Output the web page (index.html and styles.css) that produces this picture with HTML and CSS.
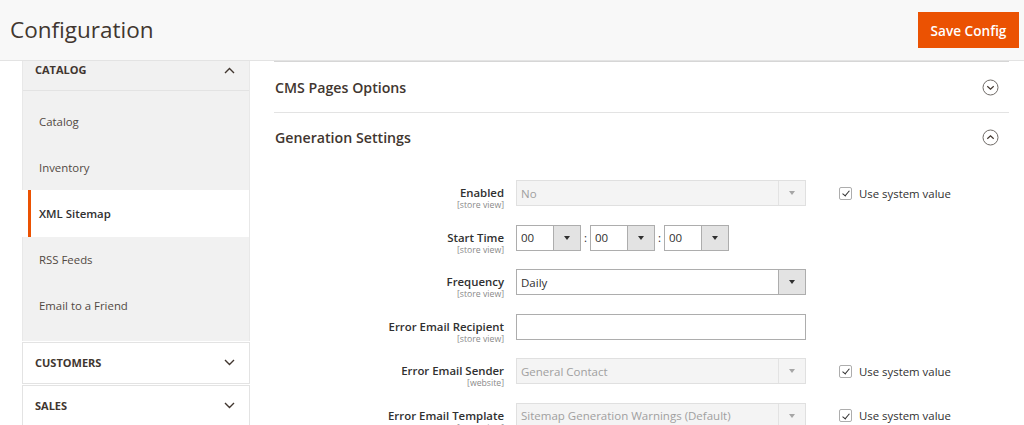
FILE: index.html
```html
<!DOCTYPE html>
<html lang="en">
<head>
<meta charset="utf-8">
<title>Configuration</title>
<link rel="stylesheet" href="styles.css">
</head>
<body>
<header class="page-header">
  <h1 class="page-title">Configuration</h1>
  <button class="btn-primary" type="button">Save Config</button>
</header>
<div class="page-body">
  <nav class="sidebar">
    <div class="nav-group open">
      <div class="nav-title">
        <span>CATALOG</span>
        <svg class="chev" width="11" height="7" viewBox="0 0 11 7"><path d="M1 6 L5.5 1.5 L10 6" fill="none" stroke="#41362f" stroke-width="1.4"/></svg>
      </div>
      <ul class="nav-items">
        <li class="nav-item"><span>Catalog</span></li>
        <li class="nav-item"><span>Inventory</span></li>
        <li class="nav-item active"><span>XML Sitemap</span></li>
        <li class="nav-item"><span>RSS Feeds</span></li>
        <li class="nav-item"><span>Email to a Friend</span></li>
      </ul>
    </div>
    <div class="nav-group">
      <div class="nav-title">
        <span>CUSTOMERS</span>
        <svg class="chev" width="11" height="7" viewBox="0 0 11 7"><path d="M1 1 L5.5 5.5 L10 1" fill="none" stroke="#41362f" stroke-width="1.4"/></svg>
      </div>
    </div>
    <div class="nav-group">
      <div class="nav-title">
        <span>SALES</span>
        <svg class="chev" width="11" height="7" viewBox="0 0 11 7"><path d="M1 1 L5.5 5.5 L10 1" fill="none" stroke="#41362f" stroke-width="1.4"/></svg>
      </div>
    </div>
  </nav>
  <main class="main">
    <section class="section">
      <div class="section-head">
        <h2>CMS Pages Options</h2>
        <svg class="circle-ico" width="17" height="17" viewBox="0 0 17 17"><circle cx="8.5" cy="8.5" r="7.5" fill="none" stroke="#6f6a66" stroke-width="1"/><path d="M5.3 7.2 L8.5 10.2 L11.7 7.2" fill="none" stroke="#41362f" stroke-width="1.2"/></svg>
      </div>
    </section>
    <section class="section open">
      <div class="section-head">
        <h2>Generation Settings</h2>
        <svg class="circle-ico" width="17" height="17" viewBox="0 0 17 17"><circle cx="8.5" cy="8.5" r="7.5" fill="none" stroke="#6f6a66" stroke-width="1"/><path d="M5.3 9.8 L8.5 6.8 L11.7 9.8" fill="none" stroke="#41362f" stroke-width="1.2"/></svg>
      </div>
      <div class="form">
        <div class="label"><span class="lbl">Enabled</span><span class="scope">[store view]</span></div>
        <div class="field">
          <div class="select disabled wide"><span class="val">No</span><span class="arrow"></span></div>
        </div>
        <label class="sys"><span class="cb"></span>Use system value</label>

        <div class="label"><span class="lbl">Start Time</span><span class="scope">[store view]</span></div>
        <div class="field time">
          <div class="select small"><span class="val">00</span><span class="arrow"></span></div>
          <span class="colon">:</span>
          <div class="select small"><span class="val">00</span><span class="arrow"></span></div>
          <span class="colon">:</span>
          <div class="select small"><span class="val">00</span><span class="arrow"></span></div>
        </div>
        <div></div>

        <div class="label"><span class="lbl">Frequency</span><span class="scope">[store view]</span></div>
        <div class="field">
          <div class="select wide"><span class="val">Daily</span><span class="arrow"></span></div>
        </div>
        <div></div>

        <div class="label"><span class="lbl">Error Email Recipient</span><span class="scope">[store view]</span></div>
        <div class="field">
          <div class="input"></div>
        </div>
        <div></div>

        <div class="label"><span class="lbl">Error Email Sender</span><span class="scope">[website]</span></div>
        <div class="field">
          <div class="select disabled wide"><span class="val">General Contact</span><span class="arrow"></span></div>
        </div>
        <label class="sys"><span class="cb"></span>Use system value</label>

        <div class="label"><span class="lbl">Error Email Template</span><span class="scope">[store view]</span></div>
        <div class="field">
          <div class="select disabled wide"><span class="val">Sitemap Generation Warnings (Default)</span><span class="arrow"></span></div>
        </div>
        <label class="sys"><span class="cb"></span>Use system value</label>
      </div>
    </section>
  </main>
</div>
</body>
</html>
```
FILE: styles.css
```css
* { box-sizing: border-box; }
html, body { margin: 0; padding: 0; }
body {
  font-family: "Open Sans", "Noto Sans", sans-serif;
  color: #303030;
  background: #fff;
  width: 1024px;
  height: 425px;
  overflow: hidden;
}
.page-header {
  height: 61px;
  background: #f8f8f8;
  border-bottom: 1px solid #e3e3e3;
  display: flex;
  align-items: flex-start;
  justify-content: space-between;
  padding: 0 5px 0 10px;
}
.page-title {
  margin: 13px 0 0;
  font-size: 22.5px;
  font-weight: 400;
  line-height: 34px;
  color: #41362f;
}
.btn-primary {
  margin-top: 12px;
  width: 101px;
  height: 36px;
  background: #eb5202;
  border: 1px solid #eb5202;
  color: #fff;
  font-family: inherit;
  font-size: 13.6px;
  font-weight: 600;
  padding: 0;
}
.page-body {
  display: flex;
  align-items: flex-start;
}
.sidebar {
  width: 228px;
  margin-left: 22px;
  flex: none;
}
.nav-group {
  border: 1px solid #e3e3e3;
  background: #fff;
  margin-top: 1px;
}
.nav-group.open {
  background: #f1f1f1;
  border-color: #e8e8e8;
  border-top: none;
  border-bottom: none;
  margin-top: 0;
}
.nav-title {
  display: flex;
  align-items: center;
  justify-content: space-between;
  height: 40px;
  padding: 0 14px 0 12px;
  font-size: 11px;
  font-weight: 700;
  color: #41362f;
}
.open .nav-title {
  height: 30px;
  align-items: flex-start;
  padding-top: 1px;
  border-bottom: 1px solid #e3e3e3;
}
.open .nav-title .chev { margin-top: 5px; }
.nav-items {
  list-style: none;
  margin: 0;
  padding: 7px 0 12px;
}
.nav-item {
  height: 46.2px;
  padding-left: 5px;
  font-size: 11.4px;
  color: #514943;
}
.nav-item span {
  display: flex;
  align-items: center;
  height: 100%;
  border-left: 3px solid transparent;
  padding-left: 8px;
}
.nav-item.active {
  background: #fff;
  margin-left: -1px;
  padding-left: 6px;
  color: #303030;
  font-weight: 600;
}
.nav-item.active span { border-left-color: #eb5202; }
.main {
  margin-left: 24px;
  width: 735px;
  border-top: 1px solid #d6d6d6;
}
.section { border-bottom: 1px solid #e3e3e3; }
.section.open { border-bottom: none; }
.section-head {
  display: flex;
  align-items: center;
  justify-content: space-between;
  height: 50px;
  padding: 0 10px 0 1px;
}
.section.open .section-head { padding-bottom: 2px; }
.section-head h2 {
  margin: 0;
  font-size: 14.2px;
  font-weight: 600;
  color: #41362f;
}
.form {
  display: grid;
  grid-template-columns: 230px 290px auto;
  grid-auto-rows: 26px;
  column-gap: 12px;
  row-gap: 18.6px;
  padding-top: 17px;
  align-items: start;
}
.label {
  display: flex;
  flex-direction: column;
  align-items: flex-end;
  padding-top: 5px;
  height: 26px;
}
.lbl {
  font-size: 11.4px;
  font-weight: 600;
  line-height: 15px;
  color: #303030;
  white-space: nowrap;
}
.scope {
  font-size: 8.7px;
  line-height: 11px;
  color: #8a8a8a;
  white-space: nowrap;
}
.field { height: 26px; display: flex; align-items: center; }
.select {
  display: flex;
  height: 26px;
  border: 1px solid #adadad;
  background: #fff;
  font-size: 11.5px;
  color: #303030;
}
.select.wide { width: 290px; }
.select .val {
  flex: 1;
  display: flex;
  align-items: center;
  padding-left: 4px;
  white-space: nowrap;
  overflow: hidden;
}
.select .arrow {
  width: 27px;
  flex: none;
  background: #e3e3e3;
  border-left: 1px solid #adadad;
  position: relative;
}
.select .arrow::after {
  content: "";
  position: absolute;
  left: 50%;
  top: 50%;
  margin: -2px 0 0 -3px;
  border-left: 3.5px solid transparent;
  border-right: 3.5px solid transparent;
  border-top: 4px solid #303030;
}
.select.disabled {
  background: #f4f4f4;
  border-color: #e0e0e0;
  color: #a0a0a0;
}
.select.disabled .arrow {
  background: #f4f4f4;
  border-left-color: #e3e3e3;
}
.select.disabled .arrow::after { border-top-color: #a6a6a6; }
.select.small { width: 65px; }
.time .colon {
  width: 9px;
  text-align: center;
  font-size: 11.5px;
  color: #303030;
}
.input {
  width: 290px;
  height: 26px;
  border: 1px solid #adadad;
  background: #fff;
}
.sys {
  display: flex;
  align-items: center;
  height: 26px;
  margin-left: 21px;
  font-size: 11.4px;
  color: #303030;
}
.cb {
  width: 13px;
  height: 13px;
  border: 1px solid #adadad;
  border-radius: 2px;
  background: #fff;
  margin-right: 7px;
  position: relative;
}
.cb::after {
  content: "";
  position: absolute;
  left: 3.5px;
  top: 1.5px;
  width: 3px;
  height: 6px;
  border-right: 1.6px solid #303030;
  border-bottom: 1.6px solid #303030;
  transform: rotate(40deg);
}
```
